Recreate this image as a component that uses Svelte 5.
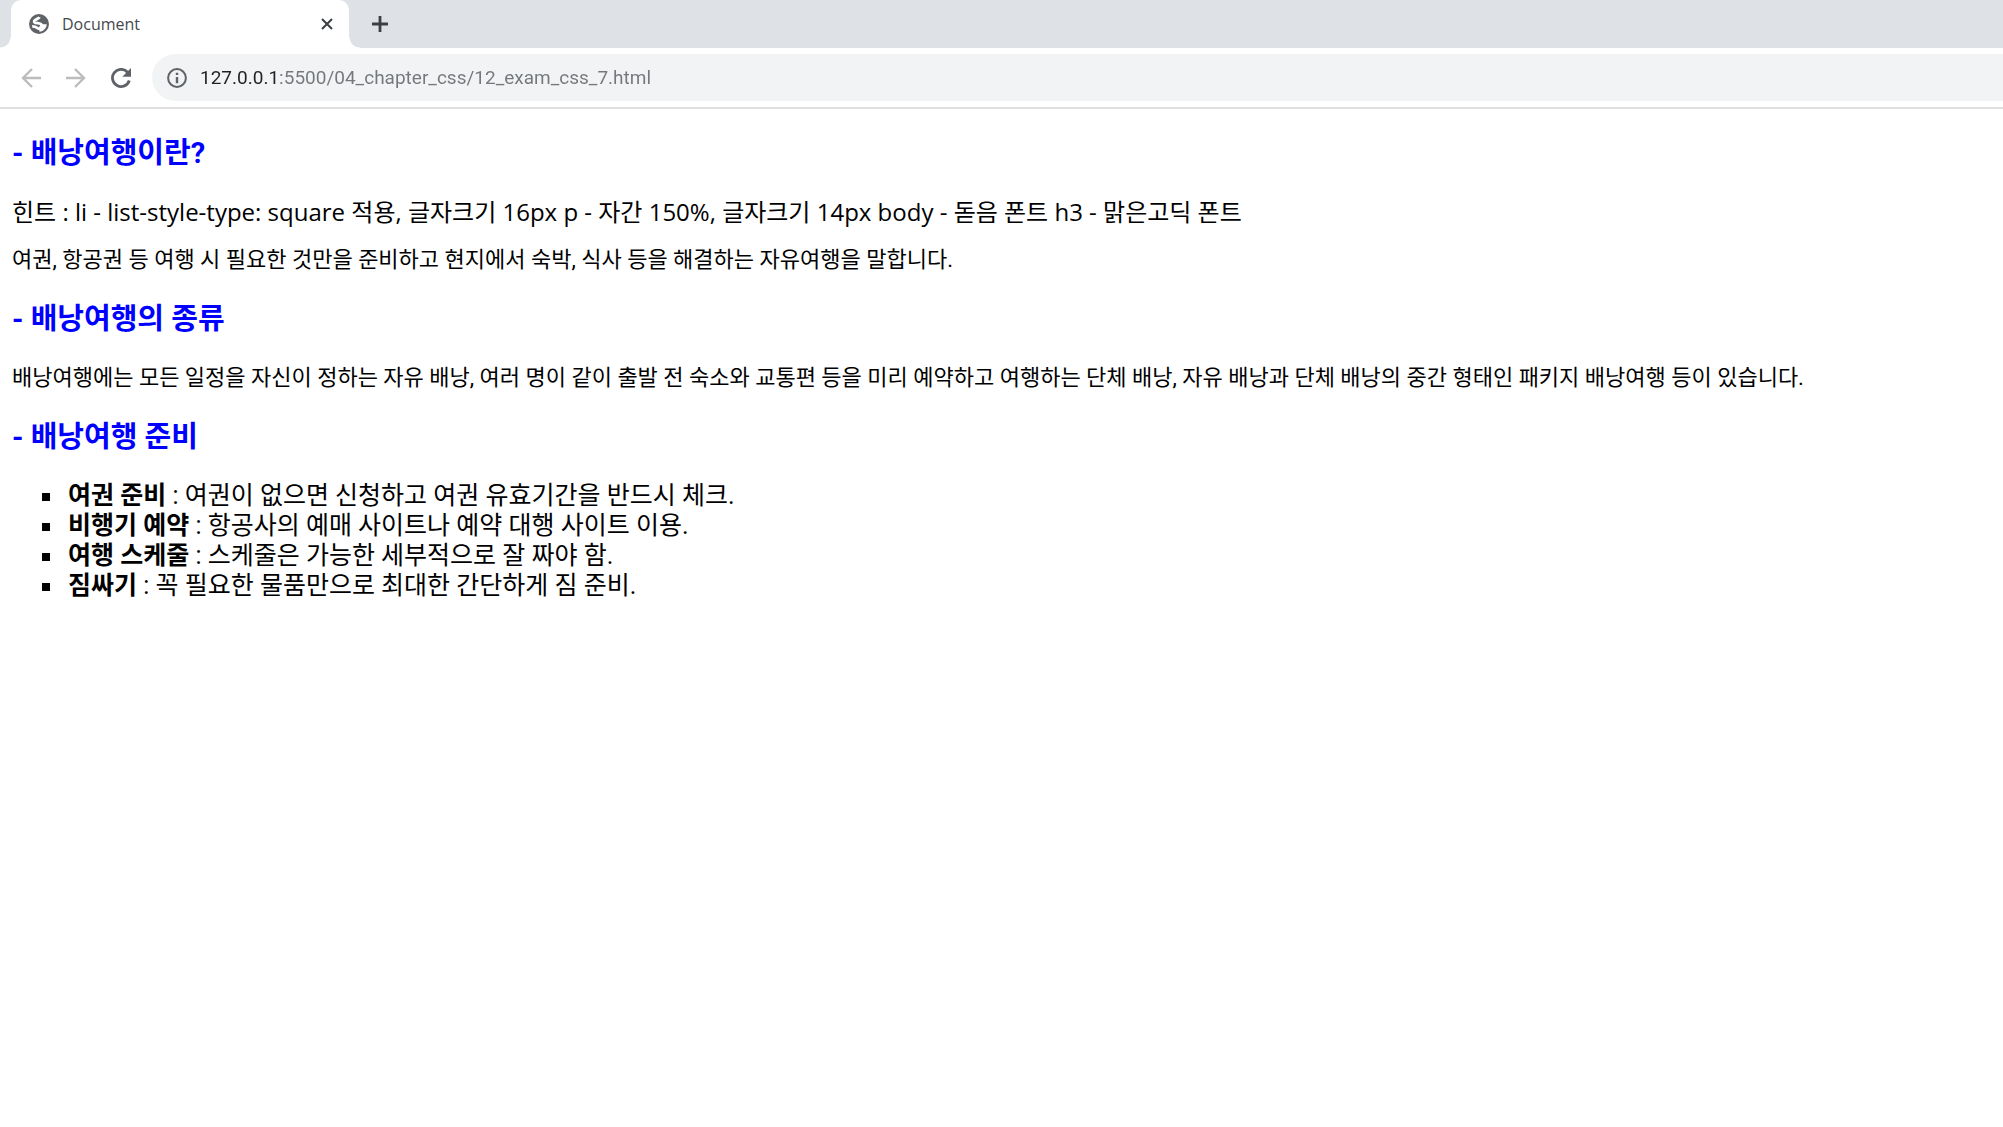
<script lang="ts">
  let address = $state('127.0.0.1:5500/04_chapter_css/12_exam_css_7.html');

  const preparations = [
    { title: '여권 준비', text: '여권이 없으면 신청하고 여권 유효기간을 반드시 체크.' },
    { title: '비행기 예약', text: '항공사의 예매 사이트나 예약 대행 사이트 이용.' },
    { title: '여행 스케줄', text: '스케줄은 가능한 세부적으로 잘 짜야 함.' },
    { title: '짐싸기', text: '꼭 필요한 물품만으로 최대한 간단하게 짐 준비.' }
  ];
</script>

<div class="browser">
  <header>
    <div class="tabs">
      <div class="tab">
        <svg class="globe" viewBox="0 0 20 20" aria-hidden="true">
          <circle cx="10" cy="10" r="10" fill="#5f6368" />
          <path
            d="M10.500 3.200C9.500 5.300 4.800 5.200 5.200 7.800C5.600 9.800 11 8.600 12.300 10.400C13.600 12.400 11.800 14.800 9.600 14.600C7.400 14.300 8 12.300 3.200 12.400"
            fill="none"
            stroke="#fff"
            stroke-width="2.800"
          />
          <path d="M12 9.500C14 11 16 9.500 17.800 10.500C17.500 14 14.500 17.500 10.500 17.800L9.800 14Z" fill="#fff" />
        </svg>
        <span class="title">Document</span>
        <button class="close" aria-label="Close tab">
          <svg viewBox="0 0 12 12"><path d="M1 1 11 11M11 1 1 11" stroke="#3c4043" stroke-width="2" /></svg>
        </button>
      </div>
      <button class="new" aria-label="New tab">
        <svg viewBox="0 0 18 18"><path d="M9 1V17M1 9H17" stroke="#3c4043" stroke-width="2.800" /></svg>
      </button>
    </div>

    <div class="toolbar">
      <nav>
        <button aria-label="Back" disabled>
          <svg viewBox="0 0 20 20"><path d="M20 10H2M11 1 2 10 11 19" fill="none" stroke="#babcbe" stroke-width="2.400" /></svg>
        </button>
        <button aria-label="Forward" disabled>
          <svg viewBox="0 0 20 20"><path d="M0 10H18M9 1 18 10 9 19" fill="none" stroke="#babcbe" stroke-width="2.400" /></svg>
        </button>
        <button aria-label="Reload">
          <svg viewBox="0 0 20 20">
            <path d="M16.500 4.200A8.600 8.600 0 1 0 18.300 12.500" fill="none" stroke="#5f6368" stroke-width="2.800" />
            <path d="M20 0V8.700H11.300Z" fill="#5f6368" />
          </svg>
        </button>
      </nav>
      <div class="omnibox">
        <svg viewBox="0 0 20 20" aria-hidden="true">
          <circle cx="10" cy="10" r="8.900" fill="none" stroke="#5f6368" stroke-width="2" />
          <path d="M10 4.700V7M10 9V15.300" stroke="#5f6368" stroke-width="2.400" />
        </svg>
        <input type="text" aria-label="Address" spellcheck="false" bind:value={address} />
      </div>
    </div>
  </header>

  <main>
    <h3>- 배낭여행이란?</h3>
    <div class="hint">힌트 : li - list-style-type: square 적용, 글자크기 16px p - 자간 150%, 글자크기 14px body - 돋음 폰트 h3 - 맑은고딕 폰트</div>
    <p>여권, 항공권 등 여행 시 필요한 것만을 준비하고 현지에서 숙박, 식사 등을 해결하는 자유여행을 말합니다.</p>

    <h3>- 배낭여행의 종류</h3>
    <p>배낭여행에는 모든 일정을 자신이 정하는 자유 배낭, 여러 명이 같이 출발 전 숙소와 교통편 등을 미리 예약하고 여행하는 단체 배낭, 자유 배낭과 단체 배낭의 중간 형태인 패키지 배낭여행 등이 있습니다.</p>

    <h3>- 배낭여행 준비</h3>
    <ul>
      {#each preparations as item}
        <li><strong>{item.title}</strong> : {item.text}</li>
      {/each}
    </ul>
  </main>
</div>

<style>
  :global(body) {
    margin: 0;
    background: #fff;
  }

  .browser {
    font-family: Roboto, 'Noto Sans CJK KR', sans-serif;
    color: #000;
  }

  button {
    display: flex;
    padding: 0;
    border: 0;
    background: none;
  }

  svg {
    display: block;
    flex: none;
    width: 20px;
    height: 20px;
  }

  .tabs {
    display: flex;
    align-items: center;
    height: 48px;
    padding-left: 11px;
    background: #dee1e6;
  }

  .tab {
    position: relative;
    display: flex;
    align-items: center;
    box-sizing: border-box;
    width: 338px;
    height: 48px;
    padding: 0 16px 0 18px;
    border-radius: 10px 10px 0 0;
    background: #fff;
  }

  /* Concave feet where the tab meets the toolbar */
  .tab::before,
  .tab::after {
    content: '';
    position: absolute;
    bottom: 0;
    width: 11px;
    height: 11px;
  }

  .tab::before {
    right: 100%;
    background: radial-gradient(circle at 0 0, #dee1e6 10px, #fff 11px);
  }

  .tab::after {
    left: 100%;
    background: radial-gradient(circle at 100% 0, #dee1e6 10px, #fff 11px);
  }

  .title {
    flex: 1;
    padding-left: 13px;
    font-family: 'Open Sans', sans-serif;
    font-size: 16px;
    line-height: 24px;
    color: #45494d;
  }

  .close svg {
    width: 12px;
    height: 12px;
  }

  .new {
    margin-left: 22px;
  }

  .new svg {
    width: 18px;
    height: 18px;
  }

  .toolbar {
    display: flex;
    align-items: center;
    height: 59px;
    border-bottom: 2px solid #dfe0e2;
  }

  nav {
    display: flex;
    gap: 25px;
    padding: 0 21px;
  }

  .omnibox {
    display: flex;
    flex: 1;
    align-items: center;
    gap: 13px;
    height: 47px;
    padding-left: 15px;
    border-radius: 24px 0 0 24px;
    background: #f1f3f4;
  }

  input {
    flex: 1;
    min-width: 0;
    padding: 0;
    border: 0;
    outline: 0;
    font-family: Roboto, sans-serif;
    font-size: 19px;
    line-height: 28px;
    /* Host in dark ink, port and path in grey */
    color: transparent;
    caret-color: #202124;
    background: linear-gradient(90deg, #202124 78px, #74777b 78px) text;
  }

  main {
    padding: 24px 12px;
  }

  h3 {
    margin: 0 0 24px;
    font-size: 29px;
    line-height: 40px;
    font-weight: 700;
    color: #00f;
  }

  .hint {
    margin-bottom: 18px;
    font-family: 'Open Sans', 'Noto Sans CJK KR', sans-serif;
    font-size: 24px;
    line-height: 30px;
  }

  p {
    margin: 0 0 24px;
    font-size: 22px;
    line-height: 30px;
  }

  ul {
    margin: 0;
    padding-left: 52px;
    list-style-type: square;
  }

  li {
    padding-left: 4px;
    font-size: 25px;
    line-height: 30px;
  }
</style>
